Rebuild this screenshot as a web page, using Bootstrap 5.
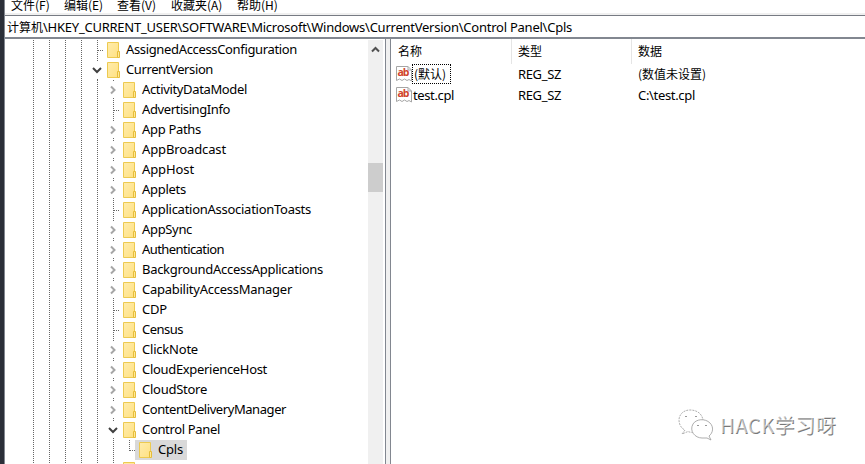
<!DOCTYPE html>
<html lang="zh-CN">
<head>
<meta charset="utf-8">
<title>注册表编辑器</title>
<link href="https://cdn.jsdelivr.net/npm/bootstrap@5.3.0/dist/css/bootstrap.min.css" rel="stylesheet">
<style>
body{width:865px;height:464px;font:13px/20px "Noto Sans","Noto Sans CJK SC",sans-serif;color:#000;background:#fff}
.zh{font-family:"Noto Sans CJK SC","Noto Sans",sans-serif;font-size:12px}
.edge{width:4px;background:#2b2f38}
.main{border-left:1px solid #828790}
.menus{height:13px;font-size:12px;padding-left:6px}
.menus span{margin-top:-5px;width:53px;height:18px}
.menus span:nth-child(3){width:54px}.menus span:nth-child(4){width:66px}
.strip{height:2px;background:#f0f0f0}
.address{height:24px;padding:1px 0 0 2px;border-top:1px solid #777b83;border-bottom:2px solid #828790;line-height:20px}
.panes{height:425px}
.tree{width:363px;padding-top:1px}
.guides{width:92px;height:425px;flex:none}
.trow{height:20px}
.trow .name{padding:0 4px 0 6px;line-height:18px}
.trow .icon{margin-top:2px}
.track{width:15px;background:#f0f0f0;margin-top:1px}
.thumb{top:123px;height:29px;background:#cdcdcd}
.gap{width:6px;margin-left:2px;border:solid #828790;border-width:0 1px;background:#f0f0f0}
.heads{height:25px}
.heads>div{padding:2px 0 0 7px}
.c1,.c2{width:120px}
.heads .c1,.heads .c2{border-right:1px solid #e5e5e5;height:25px}
.heads .c1{width:121px}
.heads .c2{padding-left:6px}
.heads .c3{padding-left:6px}
.vrow{height:21px}
.vrow .c1{padding-left:5px}
.vrow .c2,.vrow .c3{padding-left:7px}
.vrow .reg{margin-top:0}
.vrow .icon{margin-top:2px}
.val{padding:0 1px 0 0;height:20px;line-height:18px;border:1px solid transparent}
.val.on{padding:0 4px 0 1px;border:1px dotted #000}
.sel{background:#d9d9d9;height:20px;margin-left:-4px;padding-left:4px}
.mark-wm{left:678px;top:407px;width:165px;height:36px}
svg{display:block;flex:none}
</style>
<script src="https://cdn.jsdelivr.net/npm/bootstrap@5.3.0/dist/js/bootstrap.bundle.min.js"></script>
</head>
<body class="d-flex overflow-hidden position-relative">
<svg width="0" height="0" class="position-absolute">
<defs>
<linearGradient id="fg" x2="1" y2="1"><stop stop-color="#ffecac"/><stop offset="1" stop-color="#ffe182"/></linearGradient>
<symbol id="folder" viewBox="0 0 13 16"><path d="M.5.5h11v15H.5z" fill="url(#fg)" stroke="#edca50"/><path d="M10.500 9.500h2v6h-2z" fill="#ffe896" stroke="#e6bd3b"/></symbol>
<symbol id="ab" viewBox="0 0 16 16"><path d="M.5.5H12L15.500 4V15L13 13.500 11 14.500 8.500 13 6 14.500 3.500 13 .5 14.500Z" fill="#fff" stroke="#a6a6a6"/><path d="M12 .5V4h3.500" fill="none" stroke="#aaa"/><text x="1.500" y="10" font-family="Open Sans" font-weight="700" font-size="10.500" textLength="12" fill="#d0432a">ab</text></symbol>
</defs>
</svg>
<div class="edge flex-shrink-0"></div>
<div class="main d-flex flex-column flex-grow-1">
 <nav class="menus zh d-flex"><span>文件(F)</span><span>编辑(E)</span><span>查看(V)</span><span>收藏夹(A)</span><span>帮助(H)</span></nav>
 <div class="strip"></div>
 <div class="address text-nowrap"><span class="zh">计算机</span><span id="path">\HKEY_CURRENT_USER\SOFTWARE\Microsoft\Windows\CurrentVersion\Control Panel\Cpls</span></div>
 <div class="panes d-flex">
  <div class="tree d-flex overflow-hidden">
   <svg class="guides" viewBox="0 0 92 425"><g stroke="#666" stroke-dasharray="1 1"><path d="M28.500 0V425M44.500 0V425M60.500 0V425M76.500 0V425"/></g></svg>
   <div id="rows" class="flex-shrink-0 text-nowrap"></div>
  </div>
  <div class="track position-relative flex-shrink-0"><svg width="15" height="20" fill="none" stroke="#505050" stroke-width="2"><path d="M4 11.500 7.500 8 11 11.500"/></svg><div class="thumb position-absolute w-100"></div></div>
  <div class="gap flex-shrink-0"></div>
  <div class="flex-grow-1">
   <div class="heads d-flex zh"><div class="c1">名称</div><div class="c2">类型</div><div class="c3">数据</div></div>
   <div class="vrow d-flex"><div class="c1 d-flex"><svg width="16" height="16" class="icon"><use href="#ab"/></svg><span class="val on zh">(默认)</span></div><div class="c2"><span class="fit" data-w="43">REG_SZ</span></div><div class="c3 zh">(数值未设置)</div></div>
   <div class="vrow d-flex"><div class="c1 d-flex"><svg width="16" height="16" class="icon"><use href="#ab"/></svg><span class="val"><span class="fit" data-w="41">test.cpl</span></span></div><div class="c2"><span class="fit" data-w="43">REG_SZ</span></div><div class="c3"><span class="fit" data-w="57">C:\test.cpl</span></div></div>
  </div>
 </div>
</div>
<svg class="mark-wm position-absolute" viewBox="0 0 165 36">
 <g fill="#fff" stroke="#999" stroke-width=".8"><path d="M7 23 4 27 10 24.500C15 27 24 24 25 17C26 8 20 3 12 3C5 3 1 8 1 13C1 18 4 22 7 23Z" stroke-dasharray="2 1"/><path d="M29 31 33 33 31 29C35 26 36 20 32 16C27 11 18 12 15 17C11 24 17 31 24 31Z"/></g>
 <g fill="none" stroke="#999"><path d="M7 10q1-2 2 0M17 10q1-2 2 0M19 19q1-2 2 0M27 19q1-2 2 0"/></g>
 <g font-family="Noto Sans CJK SC,sans-serif" font-size="20"><text x="42.500" y="27" textLength="116" fill="#777">HACK学习呀</text><text x="41.700" y="26.200" textLength="116" fill="#fff" opacity=".55">HACK学习呀</text></g>
</svg>
<script>
// name, depth, state (0 leaf, 1 collapsed, 2 expanded), text width
const keys=[["AssignedAccessConfiguration",0,0,171],["CurrentVersion",0,2,87],["ActivityDataModel",1,1,105],["AdvertisingInfo",1,0,88],["App Paths",1,1,59],["AppBroadcast",1,1,84],["AppHost",1,1,52],["Applets",1,1,44],["ApplicationAssociationToasts",1,0,169],["AppSync",1,1,50],["Authentication",1,1,82],["BackgroundAccessApplications",1,1,181],["CapabilityAccessManager",1,1,150],["CDP",1,0,25],["Census",1,0,41],["ClickNote",1,1,56],["CloudExperienceHost",1,1,125],["CloudStore",1,1,65],["ContentDeliveryManager",1,1,144],["Control Panel",1,2,78],["Cpls",2,0,25],["",1,0,0]];
document.getElementById('rows').innerHTML=keys.map(([n,d,s,w])=>{
 const x=.5+16*d;let p='';
 for(let i=0;i<d;i++)p+=`M${.5+16*i} 0V20`;
 p+= s? (d?`M${x} 0V2M${x} 18V20`:`M${x} 0V1M${x} 19V20`) : (d==2?`M${x} 0V11`:`M${x} 0V20`)+`M${x+.5} 10.500H${x+6.5}`;
 const a=s==1?`<path d="M${x-2.5} 6.500 ${x+1} 10 ${x-2.5} 13.500" stroke="#a6a6a6" stroke-width="2"/>`:s==2?`<path d="M${x-4.5} 8 ${x-.5} 12 ${x+3.5} 8" stroke="#404040" stroke-width="2"/>`:'';
 const W=10+16*d;
 return `<div class="trow d-flex"><svg width="${W}" height="20" viewBox="0 0 ${W} 20" fill="none" overflow="visible"><path d="${p}" stroke="#666" stroke-dasharray="1 1"/>${a}</svg><div class="d-flex ${d==2?'sel':''}"><svg width="13" height="16" class="icon"><use href="#folder"/></svg><span class="name"><span class="fit" data-w="${w}">${n}</span></span></div></div>`}).join('');
function fit(e,w){const r=document.createRange();r.selectNodeContents(e);const n=e.textContent.length;if(n)e.style.letterSpacing=((w-r.getBoundingClientRect().width)/n)+'px'}
document.querySelectorAll('.fit').forEach(e=>fit(e,+e.dataset.w));
fit(document.getElementById('path'),529);
</script>
</body>
</html>
